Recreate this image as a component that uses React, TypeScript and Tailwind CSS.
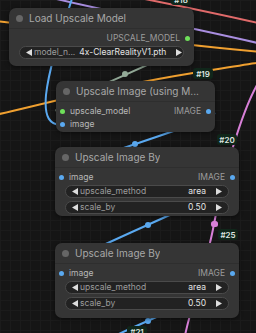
import React from 'react'

type Slot = { label: string; color: string }
type Widget = { label: string; value: string }

type NodeProps = {
  x: number
  y: number
  w: number
  h: number
  title: string
  inputs?: Slot[]
  outputs?: Slot[]
  widgets?: Widget[]
}

const Arrow = ({ dir }: { dir: 'left' | 'right' }) => (
  <svg width="6" height="7" viewBox="0 0 6 7" className="shrink-0">
    {dir === 'left' ? <path d="M0 3.5L6 0V7Z" fill="#dddddd" /> : <path d="M6 3.5L0 0V7Z" fill="#dddddd" />}
  </svg>
)

const GraphNode = (props: NodeProps) => {
  const inputs = props.inputs || []
  const outputs = props.outputs || []
  const rows = Math.max(inputs.length, outputs.length)
  return (
    <div
      className="absolute flex flex-col rounded-[7px] bg-[#353535] shadow-[0_1px_4px_rgba(0,0,0,0.5)]"
      style={{ left: props.x, top: props.y, width: props.w, height: props.h }}
    >
      <div className="flex h-[21px] items-center gap-[6px] border-b border-[#2e2e2e] pl-[7px]">
        <span className="h-[7px] w-[7px] rounded-full bg-[#666666]" />
        <span className="truncate text-[10px] text-[#a8a8a8]">{props.title}</span>
      </div>
      <div className="flex flex-col pt-[3px]">
        {Array(rows).fill(0).map((_, idx) => (
          <div key={idx} className="flex h-[13px] items-center justify-between">
            <div className="flex items-center gap-[5px] pl-[4px]">
              {inputs[idx] && (
                <>
                  <span className="h-[5px] w-[5px] rounded-full" style={{ background: inputs[idx].color }} />
                  <span className="text-[8.5px] text-[#b8b8b8]">{inputs[idx].label}</span>
                </>
              )}
            </div>
            <div className="flex items-center gap-[5px] pr-[4px]">
              {outputs[idx] && (
                <>
                  <span className="text-[8.5px] text-[#9c9c9c]">{outputs[idx].label}</span>
                  <span className="h-[5px] w-[5px] rounded-full" style={{ background: outputs[idx].color }} />
                </>
              )}
            </div>
          </div>
        ))}
        {(props.widgets || []).map((wd, idx) => (
          <div
            key={wd.label}
            className={`mx-[10px] flex h-[13px] items-center whitespace-nowrap rounded-full border border-[#4a4a4a] bg-[#222222] px-[6px] ${idx === 0 ? 'mt-[1px]' : 'mt-[3px]'}`}
          >
            <Arrow dir="left" />
            <span className="ml-[2px] shrink-0 text-[8.5px] text-[#9c9c9c]">{wd.label}</span>
            <span className="ml-auto shrink-0 pl-[4px] text-[8.5px] text-[#e4e4e4]">{wd.value}</span>
            <span className="ml-[10px] shrink-0">
              <Arrow dir="right" />
            </span>
          </div>
        ))}
      </div>
    </div>
  )
}

const Badge = ({ x, y, text }: { x: number; y: number; text: string }) => (
  <div
    className="absolute flex h-[11px] items-center justify-center rounded-[3px] bg-[#10261a] text-[8px] font-semibold text-[#dfe7e2]"
    style={{ left: x, top: y, width: 20 }}
  >
    {text}
  </div>
)

const Wires = () => (
  <svg className="absolute left-0 top-0" width="256" height="333" viewBox="0 0 256 333" fill="none">
    <path d="M-5 21C60 28 150 42 262 52" stroke="#f0a030" strokeWidth="2" />
    <path d="M-5 115C40 105 100 88 193 73S240 66 262 62" stroke="#f0a030" strokeWidth="2" />
    <path d="M40 -5C100 10 180 25 262 44" stroke="#a98ee0" strokeWidth="2" />
    <path d="M120 -6C170 4 220 14 262 24" stroke="#e06a6a" strokeWidth="2" />
    <path d="M73 -5C66 20 50 60 46 95C44 118 50 125 62 125" stroke="#5aa9f0" strokeWidth="2" />
    <path d="M187 38C230 38 20 112 62 112" stroke="#93aa98" strokeWidth="2" />
    <circle cx="125" cy="74" r="3" fill="#93aa98" />
    <path d="M209 112C252 112 19 176 62 176" stroke="#5aa9f0" strokeWidth="2" />
    <circle cx="135" cy="144" r="3" fill="#5aa9f0" />
    <path d="M233 177C276 177 19 273 62 273" stroke="#5aa9f0" strokeWidth="2" />
    <circle cx="148" cy="225" r="3" fill="#5aa9f0" />
    <path d="M233 273C276 273 19 369 62 369" stroke="#5aa9f0" strokeWidth="2" />
    <circle cx="148" cy="321" r="3" fill="#5aa9f0" />
    <path d="M260 80C242 108 222 180 214 224C206 268 192 300 184 340" stroke="#d880d8" strokeWidth="2" />
    <rect x="211" y="221" width="7" height="6" rx="2.5" fill="#d880d8" />
  </svg>
)

export default function App() {
  return (
    <div
      className="relative h-[333px] w-[256px] overflow-hidden bg-[#151515] bg-[linear-gradient(#1b1b1b_1px,transparent_1px),linear-gradient(90deg,#1b1b1b_1px,transparent_1px)] bg-[size:10px_10px] font-['Inter',sans-serif]"
    >
      <Wires />
      <Badge x={171} y={-6} text="#18" />
      <Badge x={193} y={68} text="#19" />
      <Badge x={217} y={134} text="#20" />
      <Badge x={218} y={229} text="#25" />
      <Badge x={127} y={326} text="#21" />

      <GraphNode
        x={9}
        y={8}
        w={185}
        h={58}
        title="Load Upscale Model"
        outputs={[{ label: 'UPSCALE_MODEL', color: '#6fe05a' }]}
        widgets={[{ label: 'model_n...', value: '4x-ClearRealityV1.pth' }]}
      />
      <GraphNode
        x={56}
        y={81}
        w={159}
        h={51}
        title="Upscale Image (using M..."
        inputs={[
          { label: 'upscale_model', color: '#6fe05a' },
          { label: 'image', color: '#5aa9f0' },
        ]}
        outputs={[{ label: 'IMAGE', color: '#5aa9f0' }]}
      />
      <GraphNode
        x={55}
        y={147}
        w={184}
        h={69}
        title="Upscale Image By"
        inputs={[{ label: 'image', color: '#5aa9f0' }]}
        outputs={[{ label: 'IMAGE', color: '#5aa9f0' }]}
        widgets={[
          { label: 'upscale_method', value: 'area' },
          { label: 'scale_by', value: '0.50' },
        ]}
      />
      <GraphNode
        x={55}
        y={243}
        w={184}
        h={75}
        title="Upscale Image By"
        inputs={[{ label: 'image', color: '#5aa9f0' }]}
        outputs={[{ label: 'IMAGE', color: '#5aa9f0' }]}
        widgets={[
          { label: 'upscale_method', value: 'area' },
          { label: 'scale_by', value: '0.50' },
        ]}
      />
    </div>
  )
}
